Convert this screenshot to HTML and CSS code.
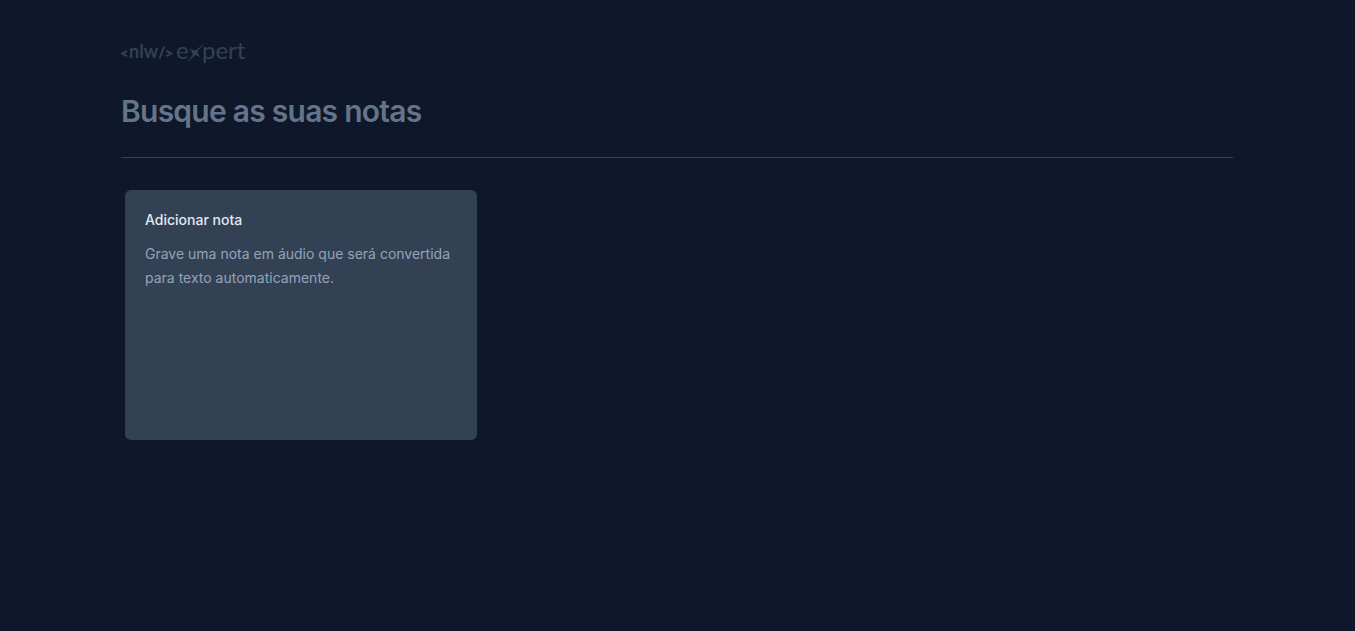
FILE: index.html
```html
<!DOCTYPE html>
<html lang="pt-BR">
<head>
  <meta charset="utf-8">
  <meta name="viewport" content="width=device-width, initial-scale=1">
  <title>NLW Expert - Notas</title>
  <link rel="stylesheet" href="styles.css">
</head>
<body>
  <main class="page">
    <svg class="logo" viewBox="0 0 125 24" role="img" aria-label="nlw expert">
      <g class="logo-mark">
        <path d="M6 10.800 1.200 13.500l4.800 2.700M45.500 10.800l4.800 2.700-4.800 2.700M43 6.500l-4.300 12"/>
      </g>
      <text class="logo-nlw" x="8" y="18">nlw</text>
      <text class="logo-expert" x="55" y="19">e</text>
      <path class="logo-star" d="M84 3 L76.500 11 Q76 13 79.500 17.500 Q76 15 74 15 Q70 19 65.500 23.500 L71.500 15 Q72 12 68 7.500 Q71.500 10.500 74.500 10.500 Z"/>
      <text class="logo-expert" x="81" y="19">pert</text>
    </svg>
    <form class="search">
      <input class="search-input" type="text" placeholder="Busque as suas notas" aria-label="Busque as suas notas">
    </form>
    <hr class="divider">
    <section class="notes">
      <button class="card" type="button">
        <span class="card-title">Adicionar nota</span>
        <span class="card-text">Grave uma nota em áudio que será convertida para texto automaticamente.</span>
      </button>
    </section>
  </main>
</body>
</html>
```
FILE: styles.css
```css
* {
  box-sizing: border-box;
}

body {
  margin: 0;
  background: #0f172a;
  color: #f8fafc;
  font-family: Inter, "Liberation Sans", sans-serif;
}

.page {
  display: flex;
  flex-direction: column;
  gap: 24px;
  max-width: 1153px;
  margin: 0 auto;
  padding: 40px 21px 40px 20px;
}

.logo {
  width: 125px;
  height: 24px;
  overflow: visible;
  fill: #334155;
}

.logo-mark {
  fill: none;
  stroke: #334155;
  stroke-width: 2;
}

.logo-nlw {
  font: 700 18px Lato, sans-serif;
}

.logo-expert {
  font: 400 24px Lato, sans-serif;
}

.search {
  display: flex;
}

.search-input {
  width: 100%;
  height: 45px;
  padding: 0;
  border: 0;
  outline: 0;
  background: transparent;
  color: inherit;
  font: 600 30px/36px Inter, "Liberation Sans", sans-serif;
  letter-spacing: -0.025em;
}

.search-input::placeholder {
  color: #64748b;
  opacity: 1;
}

.divider {
  width: 100%;
  height: 1px;
  margin: 0;
  border: 0;
  background: #334155;
}

.notes {
  display: grid;
  grid-template-columns: repeat(3, 1fr);
  grid-auto-rows: 250px;
  gap: 24px;
  padding: 8px 4px;
}

.card {
  display: flex;
  flex-direction: column;
  gap: 12px;
  padding: 20px;
  border: 0;
  border-radius: 6px;
  background: #334155;
  font: 400 14px/24px Inter, "Liberation Sans", sans-serif;
  text-align: left;
}

.card-title {
  color: #e2e8f0;
  font-weight: 500;
  line-height: 20px;
}

.card-text {
  color: #94a3b8;
}

@media (max-width: 900px) {
  .notes {
    grid-template-columns: 1fr;
  }
}
```
